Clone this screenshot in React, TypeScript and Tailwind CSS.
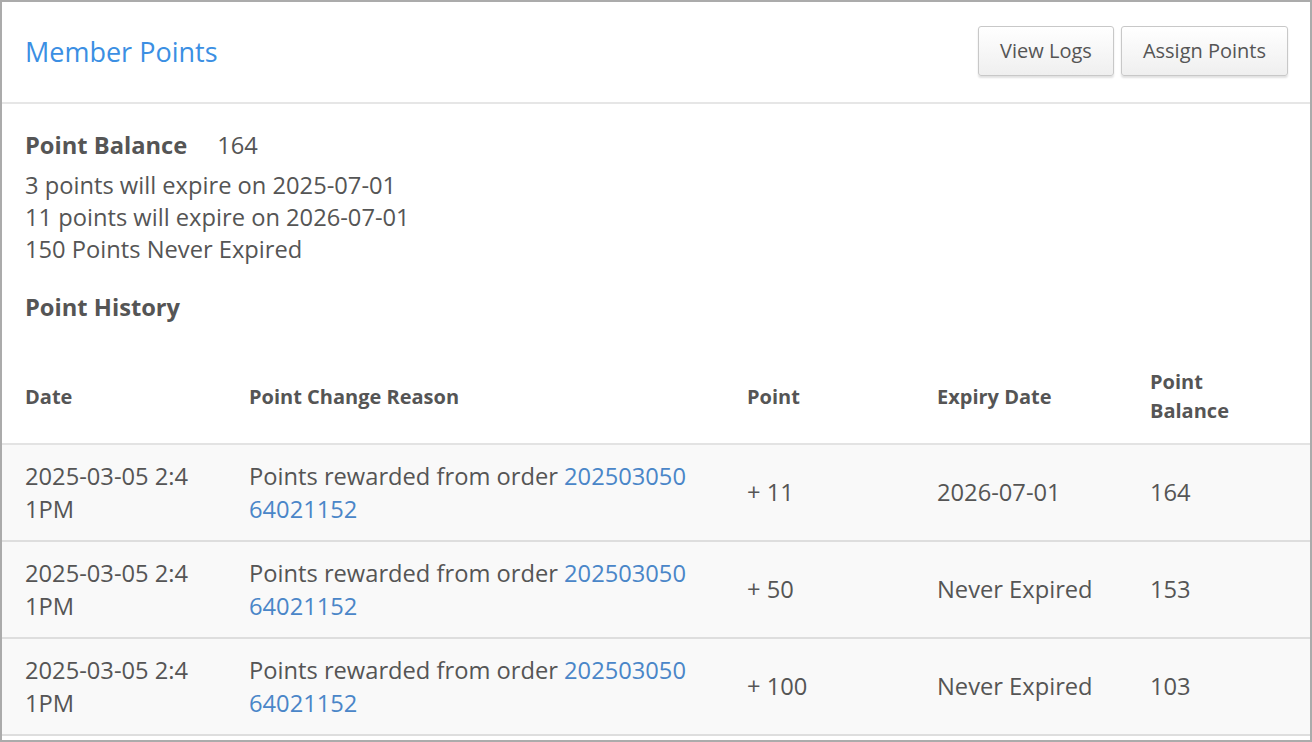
import React from "react";

type Row = {
  date: string;
  order: string;
  point: string;
  expiry: string;
  balance: string;
};

const rows: Row[] = [
  { date: "2025-03-05 2:41PM", order: "20250305064021152", point: "+ 11", expiry: "2026-07-01", balance: "164" },
  { date: "2025-03-05 2:41PM", order: "20250305064021152", point: "+ 50", expiry: "Never Expired", balance: "153" },
  { date: "2025-03-05 2:41PM", order: "20250305064021152", point: "+ 100", expiry: "Never Expired", balance: "103" },
];

const expiring = [
  "3 points will expire on 2025-07-01",
  "11 points will expire on 2026-07-01",
  "150 Points Never Expired",
];

const Button = ({ children }: { children: React.ReactNode }) => (
  <button className="h-[50px] rounded-[3px] border border-[#c8c8c8] bg-gradient-to-b from-white to-[#efefef] px-[21px] text-[20px] text-[#555] shadow-[0_2px_2px_rgba(0,0,0,0.12)]">
    {children}
  </button>
);

export default function App() {
  return (
    <div
      className="h-[742px] w-[1312px] overflow-hidden border-2 border-[#ababab] bg-white text-[#555]"
      style={{ fontFamily: '"Open Sans", "Liberation Sans", sans-serif' }}
    >
      {/* header */}
      <div className="flex h-[102px] items-center justify-between border-b-2 border-[#e6e6e6] pl-[23px] pr-[22px]">
        <h1 className="text-[27px] font-normal text-[#3b8fe3]">Member Points</h1>
        <div className="mt-[-3px] flex gap-[7px]">
          <Button>View Logs</Button>
          <Button>Assign Points</Button>
        </div>
      </div>

      {/* balance */}
      <div className="px-[23px] pt-[25px]">
        <div className="flex items-center text-[23.7px] leading-[32px]">
          <span className="font-bold">Point Balance</span>
          <span className="ml-[30px]">164</span>
        </div>
        <div className="mt-[8px] text-[23.7px] leading-[32px]">
          {expiring.map((l) => (
            <div key={l}>{l}</div>
          ))}
        </div>
        <div className="mt-[26px] text-[23.7px] font-bold leading-[32px]">Point History</div>
      </div>

      {/* history table */}
      <table className="mt-[26px] w-full table-fixed border-collapse">
        <colgroup>
          <col className="w-[222px]" />
          <col className="w-[498px]" />
          <col className="w-[190px]" />
          <col className="w-[213px]" />
          <col />
        </colgroup>
        <thead>
          <tr className="border-b-2 border-[#e3e3e3] text-left text-[20px] font-bold leading-[29px]">
            <th className="h-[95px] px-[23px] align-middle">Date</th>
            <th className="px-[25px] align-middle">Point Change Reason</th>
            <th className="px-[25px] align-middle">Point</th>
            <th className="px-[25px] align-middle">Expiry Date</th>
            <th className="px-[25px] align-middle">
              Point
              <br />
              Balance
            </th>
          </tr>
        </thead>
        <tbody>
          {rows.map((r, i) => (
            <tr key={i} className="border-b-2 border-[#dedede] bg-[#f9f9f9] text-[23.7px] leading-[33px]">
              <td className="h-[97px] break-all pl-[23px] pr-[30px] align-middle">{r.date}</td>
              <td className="break-all pl-[25px] pr-[32px] align-middle">
                Points rewarded from order <a className="text-[#4a86c8]">{r.order}</a>
              </td>
              <td className="px-[25px] align-middle">{r.point}</td>
              <td className="px-[25px] align-middle">{r.expiry}</td>
              <td className="px-[25px] align-middle">{r.balance}</td>
            </tr>
          ))}
        </tbody>
      </table>
    </div>
  );
}
